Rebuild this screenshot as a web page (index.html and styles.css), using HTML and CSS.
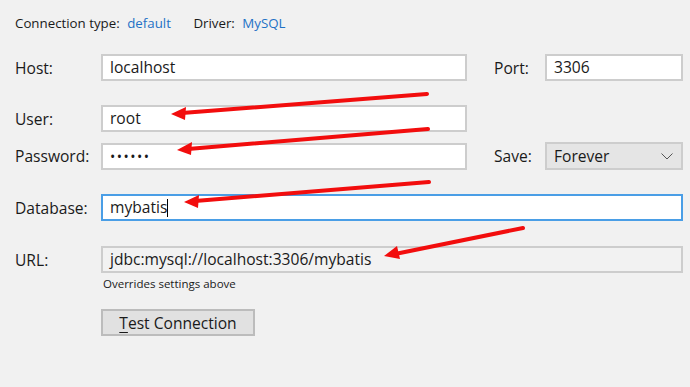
FILE: index.html
```html
<!DOCTYPE html>
<html lang="en">
<head>
  <meta charset="UTF-8" />
  <title>Connection settings</title>
  <link rel="stylesheet" href="styles.css">
</head>
<body>
  <div class="dialog">
    <div class="meta">
      <span class="meta-label">Connection type:</span>
      <span class="meta-value">default</span>
      <span class="meta-label driver">Driver:</span>
      <span class="meta-value">MySQL</span>
    </div>

    <div class="row host-row">
      <label>Host:</label>
      <div class="field">localhost</div>
      <label class="side">Port:</label>
      <div class="field">3306</div>
    </div>

    <div class="row user-row">
      <label>User:</label>
      <div class="field">root</div>
    </div>

    <div class="row pass-row">
      <label>Password:</label>
      <div class="field dots">&bull;&bull;&bull;&bull;&bull;&bull;</div>
      <label class="side">Save:</label>
      <div class="select">
        <span>Forever</span>
        <svg width="12" height="7" viewBox="0 0 12 7"><path d="M0.5 0.5 L6 6 L11.5 0.5" fill="none" stroke="#555" stroke-width="1"/></svg>
      </div>
    </div>

    <div class="row db-row">
      <label>Database:</label>
      <div class="field wide focused">mybatis<span class="caret"></span></div>
    </div>

    <div class="row url-row">
      <label>URL:</label>
      <div class="field wide readonly">jdbc:mysql://localhost:3306/mybatis</div>
    </div>
    <div class="hint">Overrides settings above</div>

    <div class="actions">
      <button><u>T</u>est Connection</button>
    </div>
  </div>

  <!-- red annotation arrows drawn over the form -->
  <svg class="arrows" width="690" height="387" viewBox="0 0 690 387">
    <g stroke="#f20d0d" stroke-width="4" stroke-linecap="round" fill="#f20d0d">
      <line x1="427" y1="94" x2="182" y2="113"/>
      <line x1="428" y1="129" x2="188" y2="149"/>
      <line x1="429" y1="182" x2="195" y2="201"/>
      <line x1="523" y1="228" x2="395" y2="254"/>
    </g>
    <g fill="#f20d0d">
      <polygon points="171,114 186,107 185,120"/>
      <polygon points="177,150 192,142 191,155"/>
      <polygon points="184,202 199,195 198,208"/>
      <polygon points="384,256 397,246 400,259"/>
    </g>
  </svg>
</body>
</html>
```

FILE: styles.css
```css
html, body { margin: 0; }
body { background: #f1f1f1; font-family: "Open Sans", "Noto Sans", sans-serif; color: #1a1a1a; width: 690px; height: 387px; overflow: hidden; position: relative; }
.dialog { padding: 13px 7px 0 15px; }
.meta { font-size: 13.3px; height: 20px; line-height: 20px; }
.meta-label { margin-right: 4px; }
.meta-value { color: #1f72c6; }
.driver { margin-left: 19px; }
.row { display: grid; grid-template-columns: 86px 366px 27px 51px 138px; align-items: center; font-size: 15.6px; }
.row label { grid-column: 1; }
.row label.side { grid-column: 4; }
.host-row { margin-top: 21px; }
.user-row { margin-top: 24px; }
.pass-row { margin-top: 10px; }
.db-row { margin-top: 24px; }
.url-row { margin-top: 25px; }
.field { height: 27px; box-sizing: border-box; border: 2px solid #cdcdcd; background: #fff; padding: 0 7px; line-height: 23px; white-space: nowrap; overflow: hidden; }
.field.wide { grid-column: 2 / 6; }
.field.focused { border-color: #4a9ee6; }
.field.readonly { background: #f2f2f2; }
.dots { letter-spacing: 1.5px; font-size: 14px; }
.caret { display: inline-block; width: 1px; height: 18px; background: #000; vertical-align: -4px; }
.select { height: 28px; box-sizing: border-box; border: 2px solid #cdcdcd; background: #e5e5e5; padding: 0 8px 0 7px; display: flex; align-items: center; justify-content: space-between; }
.hint { margin: 3px 0 0 88px; font-size: 11.5px; }
.actions { margin: 18px 0 0 86px; }
button { font: inherit; font-size: 15.6px; color: #1a1a1a; background: #e1e1e1; border: 2px solid #bcbcbc; width: 154px; height: 27px; padding: 0; line-height: 22px; }
button u { text-underline-offset: 3px; }
.arrows { position: absolute; left: 0; top: 0; pointer-events: none; }
```
